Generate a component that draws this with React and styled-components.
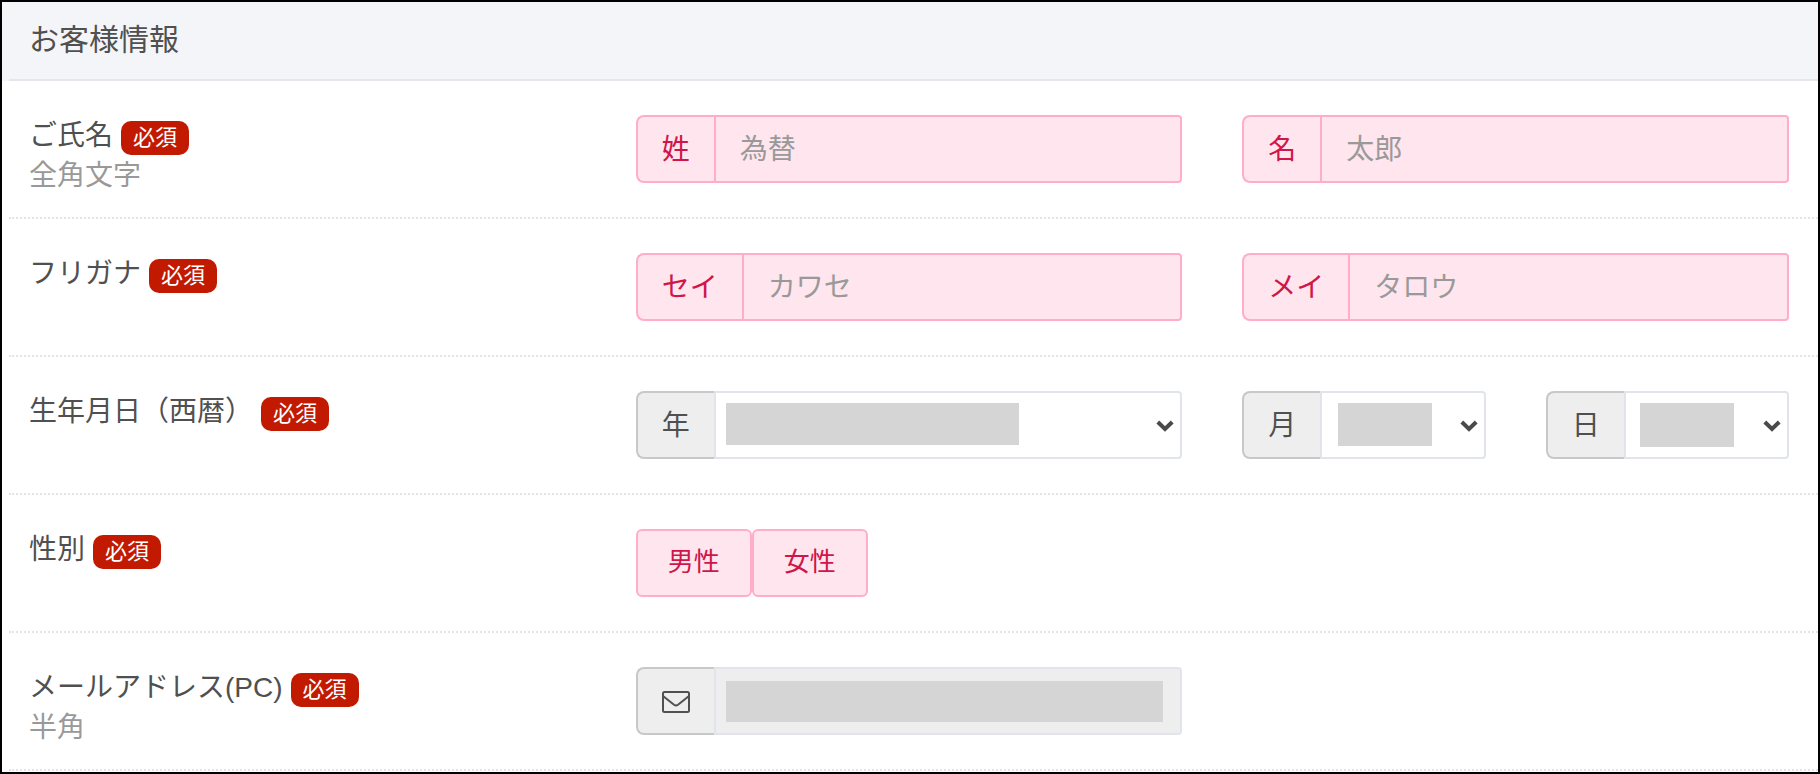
import React, { useState } from "react";
import styled, { createGlobalStyle, css } from "styled-components";

const GlobalStyle = createGlobalStyle`
  * {
    box-sizing: border-box;
  }

  body {
    margin: 0;
    background: #fff;
    color: #505050;
    font-family: "Liberation Sans", "Noto Sans CJK JP", sans-serif;
    font-size: 28px;
    line-height: 40px;
  }
`;

const Panel = styled.form`
  border: 2px solid #000;
  padding-bottom: 1px;
  background: #fff;
`;

const PanelHeader = styled.header`
  padding-left: 7px;
  background: #f4f5f8;
`;

const PanelTitle = styled.h2`
  margin: 0;
  padding: 18px 20px 19px;
  border-bottom: 2px solid #e4e6ec;
  font-size: 30px;
  font-weight: 400;
  line-height: 40px;
`;

const Rows = styled.div`
  padding-left: 7px;
`;

const Row = styled.div`
  display: grid;
  grid-template-columns: repeat(3, minmax(0, 1fr));
  column-gap: 60px;
  padding: 34px 29px 34px 20px;
  border-bottom: 2px dotted #e4e4e4;
`;

const LabelArea = styled.div`
  height: 68px;
`;

const LabelLine = styled.div`
  display: flex;
  align-items: flex-start;
  gap: 8px;
  height: 40px;
  line-height: 42px;
`;

const Badge = styled.span`
  margin-top: 6px;
  padding: 0 12px;
  border-radius: 10px;
  background: #c21a00;
  color: #fff;
  font-size: 22px;
  line-height: 34px;
`;

const Hint = styled.div`
  color: #999;
  line-height: 42px;
`;

const SplitCell = styled.div`
  display: grid;
  grid-template-columns: repeat(2, minmax(0, 1fr));
  column-gap: 60px;
`;

const tones = {
  pink: css`
    border-color: #ffadc8;
    background: #ffe5ed;
    color: #cf1549;
  `,
  gray: css`
    border-color: #c8c8c8;
    background: #eee;
    color: #505050;
  `,
};

const Group = styled.div`
  display: flex;
  height: 68px;
`;

const Addon = styled.label`
  display: flex;
  align-items: center;
  flex: none;
  padding: 2px 24px 0;
  border: 2px solid;
  border-right: 0;
  border-radius: 8px 0 0 8px;
  ${({ $tone }) => tones[$tone]}
`;

const Control = styled.div`
  position: relative;
  flex: 1;
  min-width: 0;
`;

const controlBase = css`
  display: block;
  width: 100%;
  height: 68px;
  margin: 0;
  padding: 2px 24px 0;
  border: 2px solid #e2e4ec;
  border-radius: 0 4px 4px 0;
  outline: none;
  appearance: none;
  background: #fff;
  color: #505050;
  font: inherit;
`;

const TextInput = styled.input`
  ${controlBase}
  ${({ $tone }) => $tone && tones[$tone]}

  &::placeholder {
    color: #999;
    opacity: 1;
  }

  &:disabled {
    border-color: #e2e4ec;
    background: #eee;
  }
`;

const Select = styled.select`
  ${controlBase}
`;

const Chevron = styled.svg`
  position: absolute;
  top: 28px;
  right: 8px;
  width: 18px;
  height: 14px;
  pointer-events: none;
`;

// covers the personal value inside a control
const Mask = styled.span`
  position: absolute;
  top: ${({ $top }) => $top || 12}px;
  left: ${({ $left }) => $left}px;
  width: ${({ $width }) => $width}px;
  height: ${({ $height }) => $height}px;
  background: #d5d5d5;
  pointer-events: none;
`;

const ButtonGroup = styled.div`
  display: flex;
`;

const ChoiceButton = styled.button`
  height: 68px;
  padding: 0 30px 2px;
  border: 2px solid;
  border-radius: 6px;
  font: inherit;
  font-size: 26px;
  cursor: pointer;
  ${tones.pink}
`;

const MailIcon = styled.svg`
  display: block;
  width: 28px;
  height: 22px;
`;

function FormRow({ label, hint, children }) {
  return (
    <Row>
      <LabelArea>
        <LabelLine>
          <span>{label}</span>
          <Badge>必須</Badge>
        </LabelLine>
        {hint && <Hint>{hint}</Hint>}
      </LabelArea>
      {children}
    </Row>
  );
}

function TextField({ id, label, placeholder }) {
  const [value, setValue] = useState("");

  return (
    <Group>
      <Addon htmlFor={id} $tone="pink">
        {label}
      </Addon>
      <Control>
        <TextInput
          id={id}
          type="text"
          $tone="pink"
          placeholder={placeholder}
          value={value}
          onChange={(e) => setValue(e.target.value)}
        />
      </Control>
    </Group>
  );
}

function SelectField({ id, label, maskLeft, maskWidth, maskHeight }) {
  return (
    <Group>
      <Addon htmlFor={id} $tone="gray">
        {label}
      </Addon>
      <Control>
        <Select id={id}>
          <option value="" />
        </Select>
        <Mask $left={maskLeft} $width={maskWidth} $height={maskHeight} />
        <Chevron viewBox="0 0 18 14" aria-hidden="true">
          <path
            d="M1.800 3L9 10L16.200 3"
            fill="none"
            stroke="#4a4a4a"
            strokeWidth="4"
          />
        </Chevron>
      </Control>
    </Group>
  );
}

function App() {
  const [gender, setGender] = useState(null);

  return (
    <>
      <GlobalStyle />
      <Panel>
        <PanelHeader>
          <PanelTitle>お客様情報</PanelTitle>
        </PanelHeader>
        <Rows>
          <FormRow label="ご氏名" hint="全角文字">
            <TextField id="lastName" label="姓" placeholder="為替" />
            <TextField id="firstName" label="名" placeholder="太郎" />
          </FormRow>
          <FormRow label="フリガナ">
            <TextField id="lastKana" label="セイ" placeholder="カワセ" />
            <TextField id="firstKana" label="メイ" placeholder="タロウ" />
          </FormRow>
          <FormRow label="生年月日（西暦）">
            <SelectField
              id="year"
              label="年"
              maskLeft={12}
              maskWidth={293}
              maskHeight={42}
            />
            <SplitCell>
              <SelectField
                id="month"
                label="月"
                maskLeft={18}
                maskWidth={94}
                maskHeight={43}
              />
              <SelectField
                id="day"
                label="日"
                maskLeft={16}
                maskWidth={94}
                maskHeight={44}
              />
            </SplitCell>
          </FormRow>
          <FormRow label="性別">
            <ButtonGroup>
              {["男性", "女性"].map((name) => (
                <ChoiceButton
                  key={name}
                  type="button"
                  aria-pressed={gender === name}
                  onClick={() => setGender(name)}
                >
                  {name}
                </ChoiceButton>
              ))}
            </ButtonGroup>
          </FormRow>
          <FormRow label="メールアドレス(PC)" hint="半角">
            <Group>
              <Addon htmlFor="email" $tone="gray">
                <MailIcon viewBox="0 0 28 22" aria-hidden="true">
                  <g fill="none" stroke="#505050" strokeWidth="2">
                    <rect x="1" y="1" width="26" height="20" rx="1.500" />
                    <path d="M1 5L12 13.800Q14 15.200 16 13.800L27 5" />
                  </g>
                </MailIcon>
              </Addon>
              <Control>
                <TextInput
                  id="email"
                  type="email"
                  aria-label="メールアドレス(PC)"
                  disabled
                />
                <Mask $top={14} $left={12} $width={437} $height={41} />
              </Control>
            </Group>
          </FormRow>
        </Rows>
      </Panel>
    </>
  );
}

export default App;
